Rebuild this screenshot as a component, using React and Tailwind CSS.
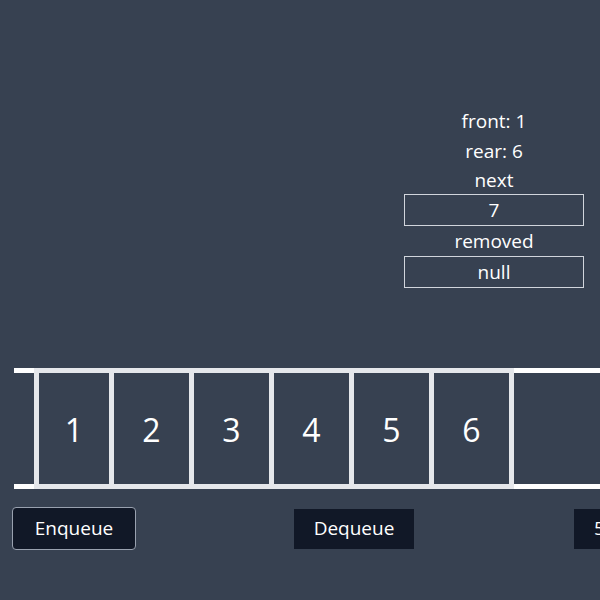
export default function App() {
  const cells = [1, 2, 3, 4, 5, 6];
  return (
    <div className="w-[600px] h-[600px] overflow-hidden bg-[#374151] text-white flex flex-col" style={{ fontFamily: '"Open Sans", "Noto Sans", sans-serif' }}>
      <div className="h-[106px] shrink-0" />
      <div className="flex justify-end pr-[16px]">
        <div className="w-[180px] flex flex-col items-center text-[19px]">
          <div className="h-[30px] leading-[30px]">front: 1</div>
          <div className="h-[30px] leading-[30px]">rear: 6</div>
          <div className="h-[28px] leading-[28px]">next</div>
          <div className="w-full h-[32px] border border-gray-300 flex items-center justify-center">7</div>
          <div className="h-[30px] leading-[30px]">removed</div>
          <div className="w-full h-[32px] border border-gray-300 flex items-center justify-center">null</div>
        </div>
      </div>
      <div className="h-[80px] shrink-0" />
      <div className="ml-[14px] h-[121px] border-y-[5px] border-white flex shrink-0">
        <div className="w-[20px] shrink-0" />
        {cells.map((n, i) => (
          <div
            key={n}
            className={
              (i === 0 ? "w-[75px] " : i === 5 ? "w-[85px] border-r-[5px] " : "w-[80px] ") +
              "shrink-0 -my-[5px] border-y-[5px] border-l-[5px] border-gray-200 flex items-center justify-center pt-[3px] text-[32px]"
            }
          >
            {n}
          </div>
        ))}
      </div>
      <div className="mt-[18px] flex items-center pl-[12px] text-[19px]">
        <button className="w-[124px] h-[43px] shrink-0 rounded-[4px] border border-gray-400 bg-[#111827] text-white">Enqueue</button>
        <button className="ml-[158px] w-[120px] h-[40px] shrink-0 bg-[#111827] text-white">Dequeue</button>
        <div className="ml-[160px] h-[40px] shrink-0 pl-[20px] pr-[20px] flex items-center bg-[#111827] text-white">5</div>
      </div>
    </div>
  );
}
